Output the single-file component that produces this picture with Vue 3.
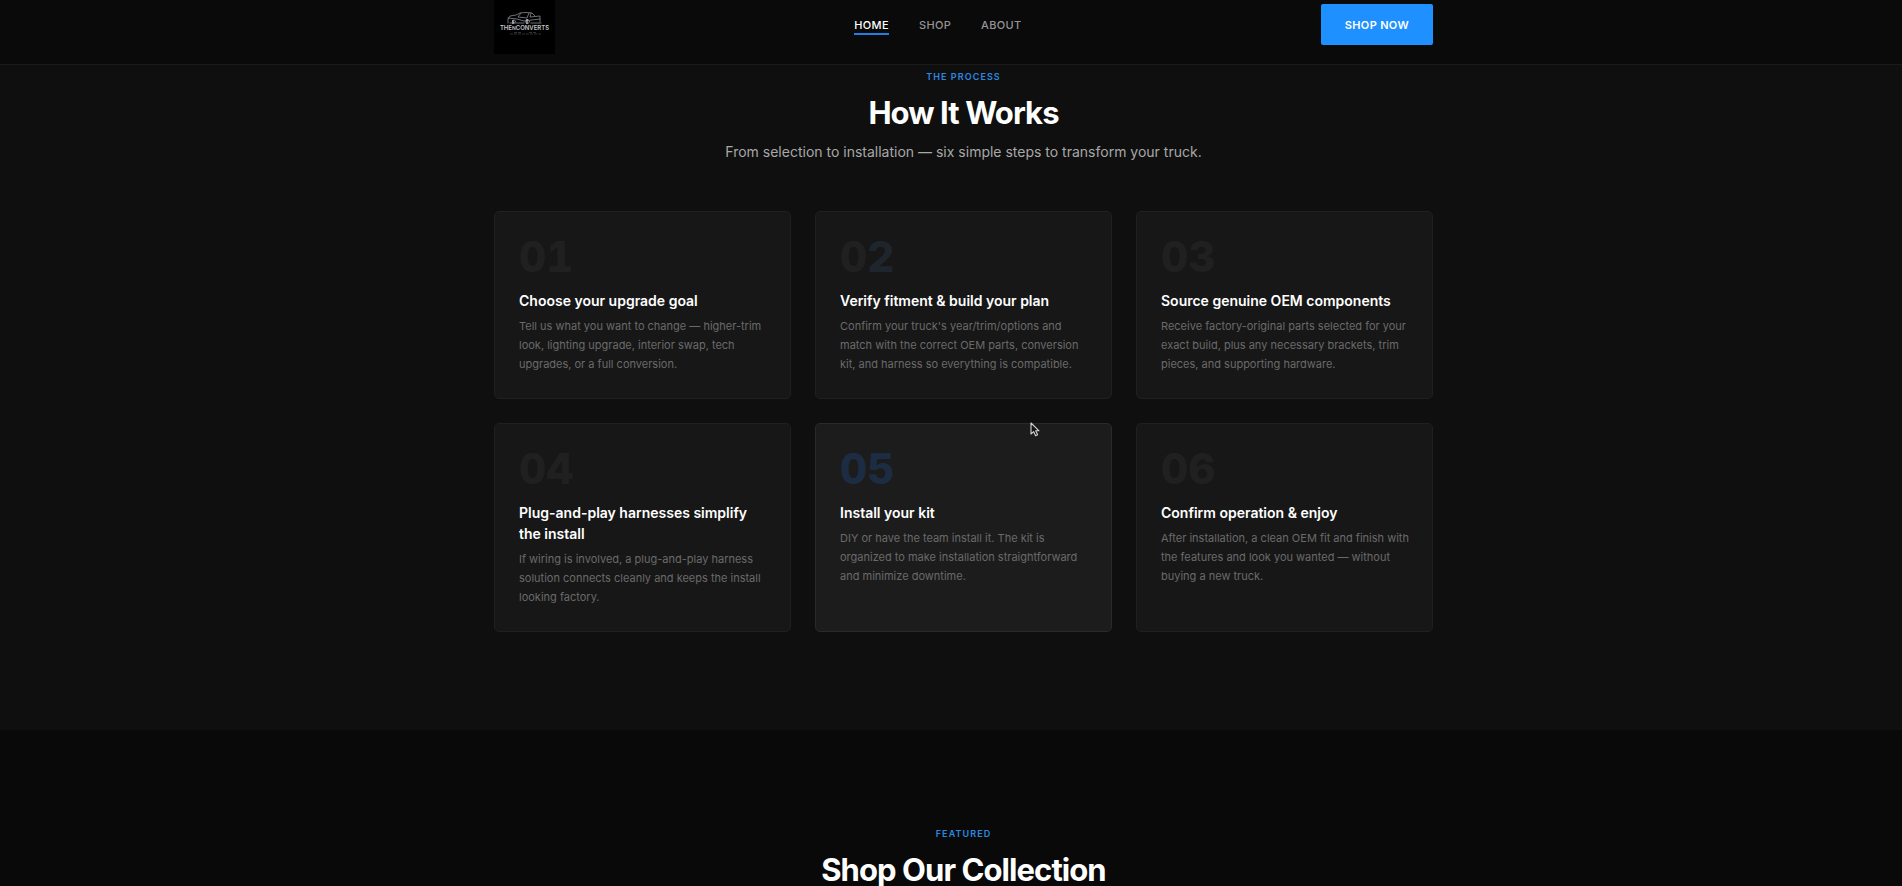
<script setup>
const links = [
  { label: 'HOME', active: true },
  { label: 'SHOP', active: false },
  { label: 'ABOUT', active: false },
]

const steps = [
  {
    number: '01',
    title: 'Choose your upgrade goal',
    text: 'Tell us what you want to change — higher-trim look, lighting upgrade, interior swap, tech upgrades, or a full conversion.',
  },
  {
    number: '02',
    title: 'Verify fitment & build your plan',
    text: "Confirm your truck's year/trim/options and match with the correct OEM parts, conversion kit, and harness so everything is compatible.",
    state: 'leaving',
  },
  {
    number: '03',
    title: 'Source genuine OEM components',
    text: 'Receive factory-original parts selected for your exact build, plus any necessary brackets, trim pieces, and supporting hardware.',
  },
  {
    number: '04',
    title: 'Plug-and-play harnesses simplify the install',
    text: 'If wiring is involved, a plug-and-play harness solution connects cleanly and keeps the install looking factory.',
  },
  {
    number: '05',
    title: 'Install your kit',
    text: 'DIY or have the team install it. The kit is organized to make installation straightforward and minimize downtime.',
    state: 'hovered',
  },
  {
    number: '06',
    title: 'Confirm operation & enjoy',
    text: 'After installation, a clean OEM fit and finish with the features and look you wanted — without buying a new truck.',
  },
]
</script>

<template>
  <div class="page">
    <header class="header">
      <div class="container header-row">
        <a class="logo" href="#" aria-label="The N Converts home">
          <svg viewBox="0 0 61 54" aria-hidden="true">
            <g fill="none" stroke="#777b7f" stroke-width="0.9" stroke-linecap="round" stroke-linejoin="round">
              <path d="M14 23v-4l2-3 6-1 4-2q6-1 12 0l3 3" />
              <path d="M27 13l-3 4 9 1 2-5M37 13l-1 4 10-1v6" />
              <path d="M14 18l9 1 7 2 16-2M16 23h14M37 23h10" />
              <circle cx="20" cy="21.500" r="1.500" />
              <circle cx="33.500" cy="21.500" r="2" />
            </g>
            <path d="M33 19v5M19 20v4" stroke="#d3d6d8" stroke-width="1.200" />
            <text x="30.500" y="30" text-anchor="middle" class="logo-name">THE<tspan class="logo-small">N</tspan>CONVERTS</text>
            <path d="M16 34h31M20 32.500h8M35 32.500h8" stroke="#303236" stroke-width="1" stroke-dasharray="3 1" />
          </svg>
        </a>
        <nav class="nav" aria-label="Main">
          <a
            v-for="link in links"
            :key="link.label"
            href="#"
            class="nav-link"
            :class="{ active: link.active }"
          >{{ link.label }}</a>
        </nav>
        <button class="shop-now" type="button">SHOP NOW</button>
      </div>
    </header>

    <main>
      <section class="process">
        <div class="container">
          <div class="intro">
            <p class="eyebrow">THE PROCESS</p>
            <h2 class="heading">How It Works</h2>
            <p class="lead">From selection to installation — six simple steps to transform your truck.</p>
          </div>
          <div class="steps">
            <article v-for="step in steps" :key="step.number" class="card" :class="step.state">
              <div class="number"><span>{{ step.number[0] }}</span><span>{{ step.number[1] }}</span></div>
              <h3 class="title">{{ step.title }}</h3>
              <p class="text">{{ step.text }}</p>
              <svg v-if="step.state === 'hovered'" class="pointer" viewBox="0 0 10 15" aria-hidden="true">
                <path d="M1 1v11l2.600-2.400 2 4.200 2-1-1.900-4h3.300z" fill="#151515" stroke="#d4d4d4" stroke-width="1.100" stroke-linejoin="round" />
              </svg>
            </article>
          </div>
        </div>
      </section>

      <section class="featured">
        <div class="container intro">
          <p class="eyebrow">FEATURED</p>
          <h2 class="heading">Shop Our Collection</h2>
        </div>
      </section>
    </main>
  </div>
</template>

<style>
body {
  background: #090909;
}
</style>

<style scoped>
.page {
  box-sizing: border-box;
  height: 100vh;
  overflow: hidden;
  background: #090909;
  color: #fff;
  font-family: Inter, "Liberation Sans", sans-serif;
}

.page * {
  box-sizing: border-box;
}

.page p,
.page h2,
.page h3 {
  margin: 0;
}

.container {
  width: 100%;
  max-width: 939px;
  margin: 0 auto;
}

.header,
.process,
.featured {
  padding-left: 25px;
}

.header {
  background: #0a0a0a;
  border-bottom: 1px solid #1a1a1a;
}

.header-row {
  display: flex;
  justify-content: space-between;
  align-items: flex-start;
  height: 64px;
}

.logo {
  display: block;
  width: 61px;
  height: 54px;
  background: #000;
}

.logo svg {
  display: block;
  width: 100%;
}

.logo-name {
  fill: #c3c6c9;
  font-size: 6px;
  font-weight: 600;
}

.logo-small {
  font-size: 5px;
}

.nav {
  display: flex;
  gap: 30px;
  padding-top: 18px;
}

.nav-link {
  border-bottom: 2px solid transparent;
  color: #949494;
  font-size: 11px;
  font-weight: 500;
  line-height: 15px;
  letter-spacing: 0.03em;
  text-decoration: none;
}

.nav-link.active {
  border-bottom-color: #1e7fe0;
  color: #fff;
}

.shop-now {
  height: 41px;
  margin-top: 4px;
  padding: 0 24px;
  border: 0;
  border-radius: 2px;
  background: #1e90ff;
  color: #fff;
  font-family: inherit;
  font-size: 11px;
  font-weight: 600;
  letter-spacing: 0.03em;
}

.process {
  padding-top: 5px;
  padding-bottom: 98px;
  background: #0f0f0f;
}

.featured {
  padding-top: 97px;
}

.intro {
  text-align: center;
}

.eyebrow {
  color: #2b89e4;
  font-size: 9px;
  font-weight: 600;
  line-height: 14px;
  letter-spacing: 0.12em;
}

.heading {
  padding-top: 10px;
  font-size: 31px;
  font-weight: 700;
  line-height: 38px;
  letter-spacing: -0.03em;
}

.lead {
  padding-top: 8px;
  color: #a8a8a8;
  font-size: 14px;
  line-height: 24px;
}

.steps {
  display: grid;
  grid-template-columns: repeat(3, 1fr);
  gap: 24px;
  margin-top: 47px;
}

.card {
  position: relative;
  padding: 24px 20px 24px 24px;
  border: 1px solid #202020;
  border-radius: 5px;
  background: #171717;
}

.number {
  margin-bottom: 12px;
  color: #202020;
  font-size: 42px;
  font-weight: 800;
  line-height: 42px;
  font-variant-numeric: tabular-nums;
}

.title {
  color: #fff;
  font-size: 14px;
  font-weight: 600;
  line-height: 21px;
}

.text {
  padding-top: 6px;
  color: #6a6a6a;
  font-size: 11px;
  line-height: 19px;
}

.leaving .number span:last-child {
  color: #1e252c;
}

.hovered {
  border-color: #2a2a2a;
  background: #1c1c1c;
}

.hovered .number {
  color: #1c2c42;
}

.pointer {
  position: absolute;
  top: -2px;
  left: 214px;
  width: 10px;
  height: 15px;
}
</style>
